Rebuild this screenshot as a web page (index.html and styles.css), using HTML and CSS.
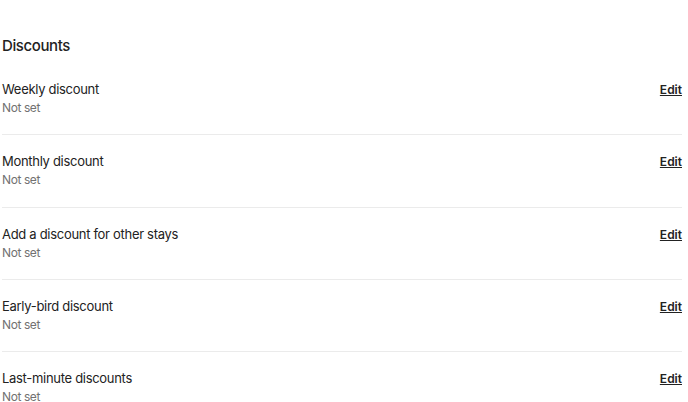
FILE: index.html
```html
<!DOCTYPE html>
<html lang="en">
<head>
  <meta charset="UTF-8">
  <meta name="viewport" content="width=device-width, initial-scale=1.0">
  <title>Discounts</title>
  <link rel="stylesheet" href="styles.css">
</head>
<body>
  <section class="discounts">
    <h2>Discounts</h2>

    <div class="discount-row">
      <div class="discount-info">
        <div class="discount-title">Weekly discount</div>
        <div class="discount-value">Not set</div>
      </div>
      <a href="#" class="edit-link">Edit</a>
    </div>

    <div class="discount-row">
      <div class="discount-info">
        <div class="discount-title">Monthly discount</div>
        <div class="discount-value">Not set</div>
      </div>
      <a href="#" class="edit-link">Edit</a>
    </div>

    <div class="discount-row">
      <div class="discount-info">
        <div class="discount-title">Add a discount for other stays</div>
        <div class="discount-value">Not set</div>
      </div>
      <a href="#" class="edit-link">Edit</a>
    </div>

    <div class="discount-row">
      <div class="discount-info">
        <div class="discount-title">Early-bird discount</div>
        <div class="discount-value">Not set</div>
      </div>
      <a href="#" class="edit-link">Edit</a>
    </div>

    <div class="discount-row">
      <div class="discount-info">
        <div class="discount-title">Last-minute discounts</div>
        <div class="discount-value">Not set</div>
      </div>
      <a href="#" class="edit-link">Edit</a>
    </div>
  </section>
</body>
</html>
```

FILE: styles.css
```css
body {
  font-family: Inter, "Noto Sans", sans-serif;
  margin: 0;
  padding: 36px 6px 0 2px;
  background-color: #fff;
  color: #222;
}

.discounts h2 {
  margin: 0 0 7px;
  font-size: 15px;
  line-height: 20px;
  font-weight: 550;
  letter-spacing: -0.4px;
}

.discount-row {
  display: flex;
  justify-content: space-between;
  align-items: flex-start;
  padding: 16px 0 17.25px;
  border-bottom: 1px solid #ebebeb;
}

.discount-title {
  font-size: 13px;
  line-height: 20px;
  letter-spacing: -0.3px;
}

.discount-value {
  font-size: 12px;
  line-height: 18px;
  color: #717171;
  letter-spacing: -0.4px;
}

.edit-link {
  font-size: 12px;
  line-height: 20px;
  font-weight: 600;
  color: #222;
  text-decoration: underline;
  margin-top: 1px;
}
```
